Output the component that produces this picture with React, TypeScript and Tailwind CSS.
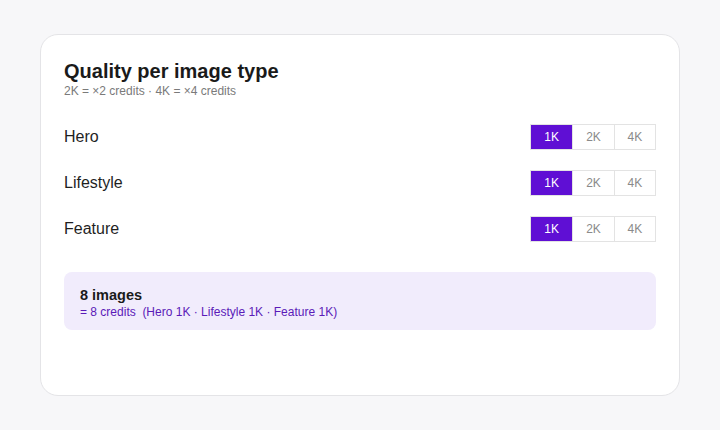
import { useState } from 'react'

type Quality = '1K' | '2K' | '4K'

const options: Quality[] = ['1K', '2K', '4K']
const types = ['Hero', 'Lifestyle', 'Feature']

function Segmented({ value, onChange }: { value: Quality; onChange: (q: Quality) => void }) {
  return (
    <div className="grid grid-cols-3 w-[126px] border border-[#e3e3e3]">
      {options.map((o, i) => (
        <button
          key={o}
          onClick={() => onChange(o)}
          className={
            'h-[24px] text-[12px] leading-none ' +
            (i > 0 ? 'border-l border-[#e3e3e3] ' : '') +
            (o === value ? 'bg-[#5f0fd4] text-white' : 'bg-white text-[#8a8a8a]')
          }
        >
          {o}
        </button>
      ))}
    </div>
  )
}

export default function App() {
  const [q, setQ] = useState<Record<string, Quality>>({ Hero: '1K', Lifestyle: '1K', Feature: '1K' })
  const mult = { '1K': 1, '2K': 2, '4K': 4 }
  const credits = types.reduce((s, t) => s + (8 / 3) * mult[q[t]], 0)

  return (
    <div
      className="min-h-screen bg-[#f7f7f9] pt-[34px] px-[40px]"
      style={{ fontFamily: '"Liberation Sans", Arial, sans-serif' }}
    >
      <div className="h-[362px] bg-white border border-[#e4e4e7] rounded-[18px] px-[23px] pt-[24px]">
        <h2 className="text-[20px] font-bold text-[#1a1a1a] leading-[24px]">Quality per image type</h2>
        <p className="text-[12px] text-[#7a7a7a] mt-[1px] leading-[15px]">2K = ×2 credits · 4K = ×4 credits</p>

        <div className="mt-[25px] flex flex-col gap-[20px]">
          {types.map(t => (
            <div key={t} className="flex items-center justify-between h-[26px]">
              <span className="text-[16px] text-[#1f1f1f]">{t}</span>
              <Segmented value={q[t]} onChange={v => setQ({ ...q, [t]: v })} />
            </div>
          ))}
        </div>

        <div className="mt-[30px] h-[58px] bg-[#f1ecfc] rounded-[8px] px-[16px] pt-[15px]">
          <div className="text-[14.5px] font-bold text-[#1a1a1a] leading-[17px]">8 images</div>
          <div className="text-[12px] text-[#5b1ab8] leading-[15px] mt-[1px]">
            = {Math.round(credits)} credits&nbsp; (Hero {q.Hero} · Lifestyle {q.Lifestyle} · Feature {q.Feature})
          </div>
        </div>
      </div>
    </div>
  )
}
